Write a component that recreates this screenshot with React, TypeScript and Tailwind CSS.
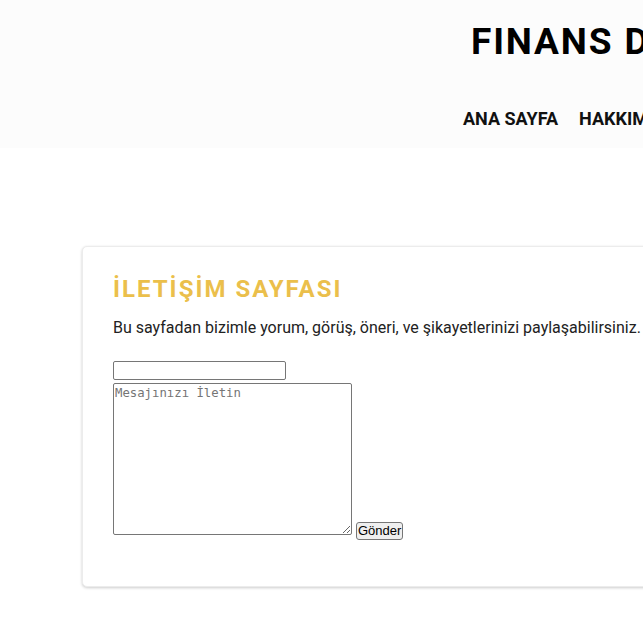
function Header() {
  return (
    <header className="bg-[#fcfcfc] h-[148px] flex flex-col">
      <h1 className="pl-[471px] pt-[20px] text-[37px] leading-[44px] font-bold tracking-[0.05em] text-black whitespace-nowrap">
        FINANS DÜNYASI
      </h1>
      <nav className="pl-[463px] mt-[43px] flex gap-[21px] text-[18px] leading-[24px] font-bold text-[#111] whitespace-nowrap">
        <a>ANA SAYFA</a>
        <a>HAKKIMIZDA</a>
        <a>İLETİŞİM</a>
      </nav>
    </header>
  );
}

function ContactCard() {
  return (
    <section className="ml-[82px] mt-[98px] w-[900px] bg-white border border-[#ececec] rounded-[5px] shadow-[0_1px_3px_rgba(0,0,0,0.2)] pl-[30px] pt-[26px] pb-[51px]">
      <h2 className="text-[24px] leading-[32px] font-bold tracking-[2px] text-[#ebbf4b]">
        İLETİŞİM SAYFASI
      </h2>
      <p className="mt-[11px] text-[16px] leading-[24px] text-[#222]">
        Bu sayfadan bizimle yorum, görüş, öneri, ve şikayetlerinizi paylaşabilirsiniz.
      </p>
      <form className="mt-[21px]">
        <input
          type="text"
          className="block w-[173px] h-[19px] border border-[#767676] rounded-[2px] bg-white"
        />
        <div className="flex items-end gap-[4px] mt-[3px]">
          <textarea
            placeholder="Mesajınızı İletin"
            className="w-[239px] h-[152px] border border-[#767676] rounded-[2px] pt-[2px] pl-[1px] pr-[2px] text-[12.3px] leading-[15px] placeholder:text-[#757575] resize-y [font-family:'DejaVu_Sans_Mono',monospace]"
          />
          <button
            type="button"
            className="-mb-[5px] h-[18px] px-[1px] bg-[#efefef] border border-[#767676] rounded-[3px] text-[13px] leading-[14px] text-black [font-family:'Liberation_Sans',Arial,sans-serif]"
          >
            Gönder
          </button>
        </div>
      </form>
    </section>
  );
}

export default function App() {
  return (
    <div className="w-[643px] h-[638px] overflow-hidden bg-white">
      <div className="w-[1100px] [font-family:Roboto,'Liberation_Sans',sans-serif]">
        <Header />
        <ContactCard />
      </div>
    </div>
  );
}
